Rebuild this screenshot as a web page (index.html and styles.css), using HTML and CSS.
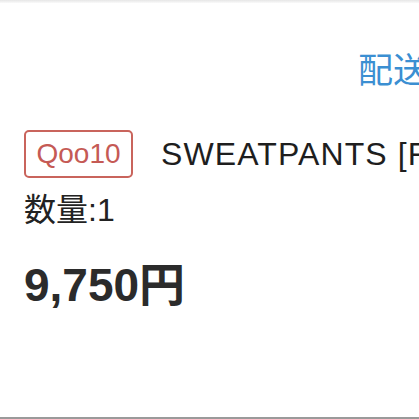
FILE: index.html
```html
<!DOCTYPE html>
<html lang="ja">
<head>
<meta charset="utf-8">
<link rel="stylesheet" href="styles.css">
</head>
<body>
<div class="page">
  <div class="topbar"></div>
  <div class="shipping"><span class="ship-link">配送料について</span></div>
  <div class="item">
    <div class="title-row">
      <span class="badge">Qoo10</span>
      <span class="title">SWEATPANTS [FLEECE]</span>
    </div>
    <div class="qty">数量:1</div>
    <div class="price">9,750円</div>
  </div>
  <div class="bottom-line"></div>
</div>
</body>
</html>
```
FILE: styles.css
```css
html, body {
  margin: 0;
  padding: 0;
  background: #ffffff;
  overflow: hidden;
}
.page {
  width: 419px;
  height: 419px;
  display: flex;
  flex-direction: column;
  overflow: hidden;
  font-family: "Liberation Sans", Arial, "Noto Sans CJK JP", sans-serif;
  color: #222;
}
.topbar {
  height: 3px;
  background: linear-gradient(#e6e6e6, #fafafa);
  flex: none;
}
.shipping {
  margin-top: 44px;
  padding-left: 358px;
  white-space: nowrap;
  height: 42px;
  flex: none;
}
.ship-link {
  font-family: "Noto Sans CJK JP", sans-serif;
  font-size: 35px;
  line-height: 42px;
  color: #3b8fd2;
}
.item {
  margin-top: 41px;
  padding-left: 24px;
  display: flex;
  flex-direction: column;
  flex: 1;
}
.title-row {
  display: flex;
  align-items: center;
  gap: 28px;
  white-space: nowrap;
}
.badge {
  flex: none;
  box-sizing: border-box;
  width: 109px;
  height: 48px;
  border: 2px solid #c9645c;
  border-radius: 5px;
  color: #c55a55;
  font-size: 28px;
  line-height: 44px;
  text-align: center;
}
.title {
  font-size: 32px;
  line-height: 40px;
  letter-spacing: 1.1px;
  color: #1e1e1e;
}
.qty {
  margin-top: 12px;
  font-size: 32px;
  line-height: 40px;
  color: #222;
}
.price {
  margin-top: 28px;
  font-size: 46px;
  font-weight: bold;
  line-height: 54px;
  color: #2b2b2b;
}
.bottom-line {
  height: 2px;
  background: #9a9a9a;
  flex: none;
}
```
